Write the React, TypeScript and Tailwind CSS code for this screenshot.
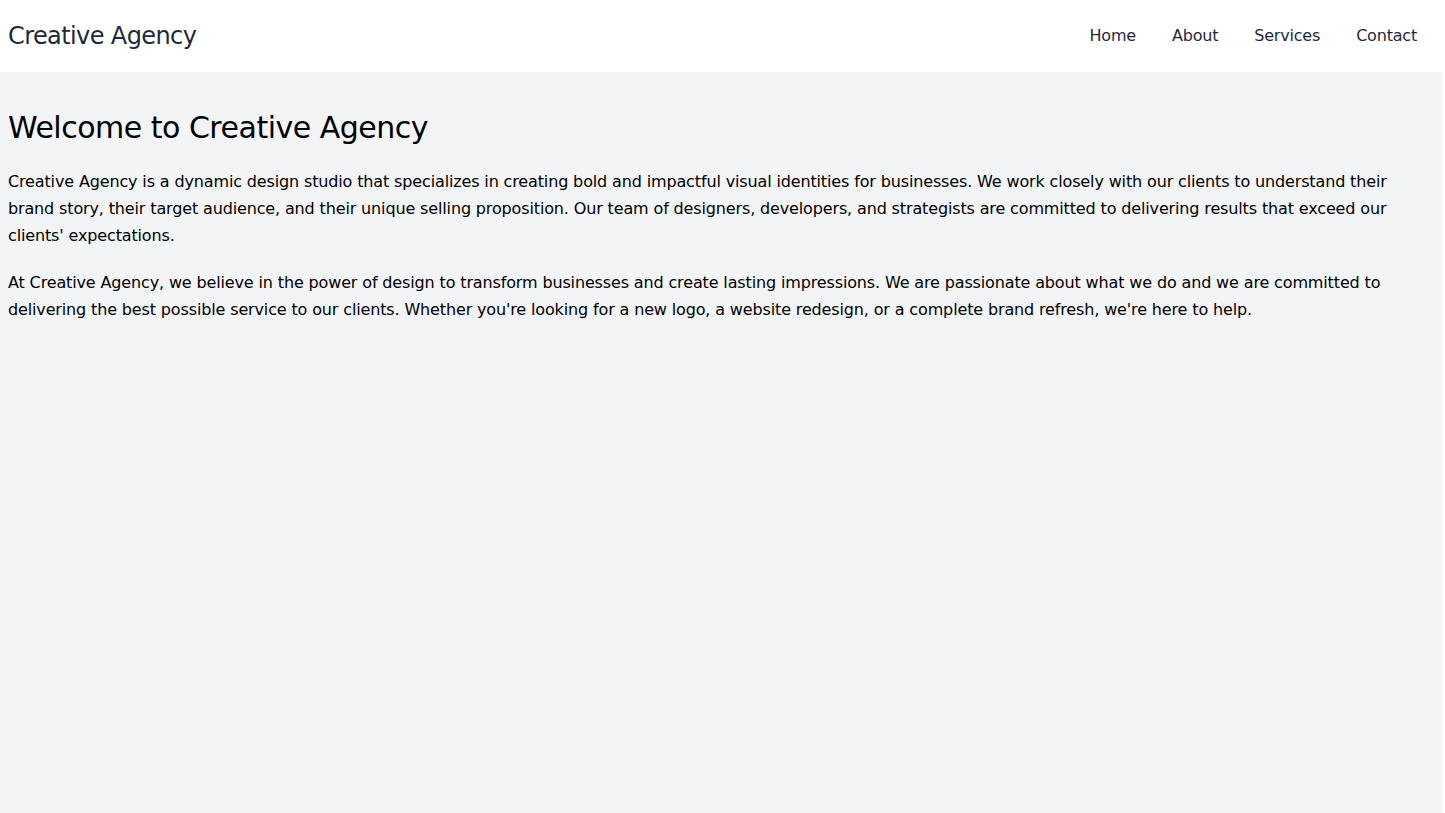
export default function App() {
  const links = ["Home", "About", "Services", "Contact"];

  return (
    <div className="w-[1443px] min-h-[813px] bg-gray-100 font-['DejaVu_Sans',sans-serif] text-black">
      <header className="bg-white">
        <div className="flex items-center justify-between px-2 h-[72px]">
          <h1 className="text-2xl text-gray-800 tracking-[-0.6px]">Creative Agency</h1>
          <nav className="flex">
            {links.map((link) => (
              <a key={link} href="#" className="px-[18px] py-2 text-base text-gray-800 tracking-[-0.2px]">
                {link}
              </a>
            ))}
          </nav>
        </div>
      </header>

      <main className="px-2 pt-[38px]">
        <h2 className="text-3xl mb-[22px] tracking-[-0.5px]">Welcome to Creative Agency</h2>
        <p className="text-base leading-[27px] mb-5 tracking-[-0.14px]">
          Creative Agency is a dynamic design studio that specializes in creating bold and impactful visual identities for businesses. We work closely with our clients to understand their brand story, their target audience, and their unique selling proposition. Our team of designers, developers, and strategists are committed to delivering results that exceed our clients' expectations.
        </p>
        <p className="text-base leading-[27px] tracking-[-0.14px]">
          At Creative Agency, we believe in the power of design to transform businesses and create lasting impressions. We are passionate about what we do and we are committed to delivering the best possible service to our clients. Whether you're looking for a new logo, a website redesign, or a complete brand refresh, we're here to help.
        </p>
      </main>
    </div>
  );
}
